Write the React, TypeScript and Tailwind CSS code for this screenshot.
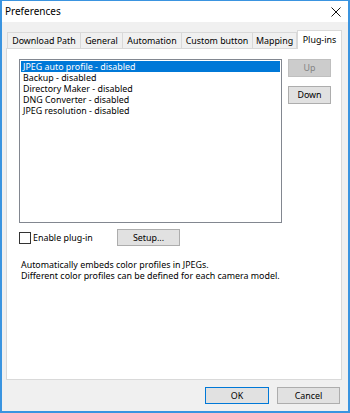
import { useState } from "react"

const tabs = [
  { label: "Download Path", w: "w-[74px]" },
  { label: "General", w: "w-[42px]" },
  { label: "Automation", w: "w-[59px]" },
  { label: "Custom button", w: "w-[71px]" },
  { label: "Mapping", w: "w-[44px]" },
]

const plugins = [
  "JPEG auto profile - disabled",
  "Backup - disabled",
  "Directory Maker - disabled",
  "DNG Converter - disabled",
  "JPEG resolution - disabled",
]

export default function App() {
  const [selected, setSelected] = useState(0)

  return (
    <div
      className="flex h-[413px] w-[350px] flex-col border-x-2 border-b-2 border-t border-[#3a94e0] bg-[#f0f0f0] text-[8.9px] text-black"
      style={{ fontFamily: "'Noto Sans', 'Open Sans', sans-serif" }}
    >
      {/* Title bar */}
      <div className="flex h-[21px] items-center justify-between bg-white pl-[3px] pr-[5px]">
        <span className="text-[10px]">Preferences</span>
        <svg width="10" height="10" viewBox="0 0 10 10" className="mr-[2px]">
          <path d="M0.5 0.5 L9.5 9.5 M9.5 0.5 L0.5 9.5" stroke="#111" strokeWidth="1" />
        </svg>
      </div>

      <div className="flex flex-1 flex-col px-[4px] pt-[8px]">
        {/* Tabs */}
        <div className="flex h-[18px] items-end pl-[1px]">
          {tabs.map((t) => (
            <div
              key={t.label}
              className={`flex h-[16px] items-center justify-center whitespace-nowrap border border-b-0 border-l-0 border-[#d9d9d9] first:border-l ${t.w}`}
            >
              {t.label}
            </div>
          ))}
          <div className="relative z-10 -mb-px flex h-[19px] w-[45px] items-center justify-center border border-b-0 border-[#d9d9d9] bg-white">
            Plug-ins
          </div>
        </div>

        {/* Panel */}
        <div className="flex h-[332px] w-[336px] flex-col border border-[#d9d9d9] bg-white pl-[12px] pt-[10px]">
          <div className="flex gap-[6px]">
            <div className="h-[164px] w-[263px] border border-[#828790] bg-white p-px">
              {plugins.map((p, i) => (
                <div
                  key={p}
                  onClick={() => setSelected(i)}
                  className={`flex h-[11px] items-center pl-[2px] leading-[11px] ${
                    selected === i ? "bg-[#0078d7] text-white" : ""
                  }`}
                >
                  {p}
                </div>
              ))}
            </div>
            <div className="flex flex-col gap-[9px]">
              <button className="h-[18px] w-[43px] border border-[#bfbfbf] bg-[#cccccc] text-[#838383]">
                Up
              </button>
              <button className="h-[18px] w-[43px] border border-[#adadad] bg-[#e1e1e1]">
                Down
              </button>
            </div>
          </div>

          <div className="mt-[6px] flex items-center">
            <span className="h-[12px] w-[12px] border border-[#333]" />
            <span className="ml-[2px] w-[84px]">Enable plug-in</span>
            <button className="h-[17px] w-[63px] border border-[#adadad] bg-[#e1e1e1]">Setup...</button>
          </div>

          <div className="mt-[13px] pl-[2px] leading-[11px]">
            <p>Automatically embeds color profiles in JPEGs.</p>
            <p>Different color profiles can be defined for each camera model.</p>
          </div>
        </div>

        {/* Footer buttons */}
        <div className="mt-[7px] flex justify-end gap-[8px] pr-[4px]">
          <button className="h-[17px] w-[64px] border border-[#0078d7] bg-[#e1e1e1]">OK</button>
          <button className="h-[17px] w-[63px] border border-[#adadad] bg-[#e1e1e1]">Cancel</button>
        </div>
      </div>
    </div>
  )
}
